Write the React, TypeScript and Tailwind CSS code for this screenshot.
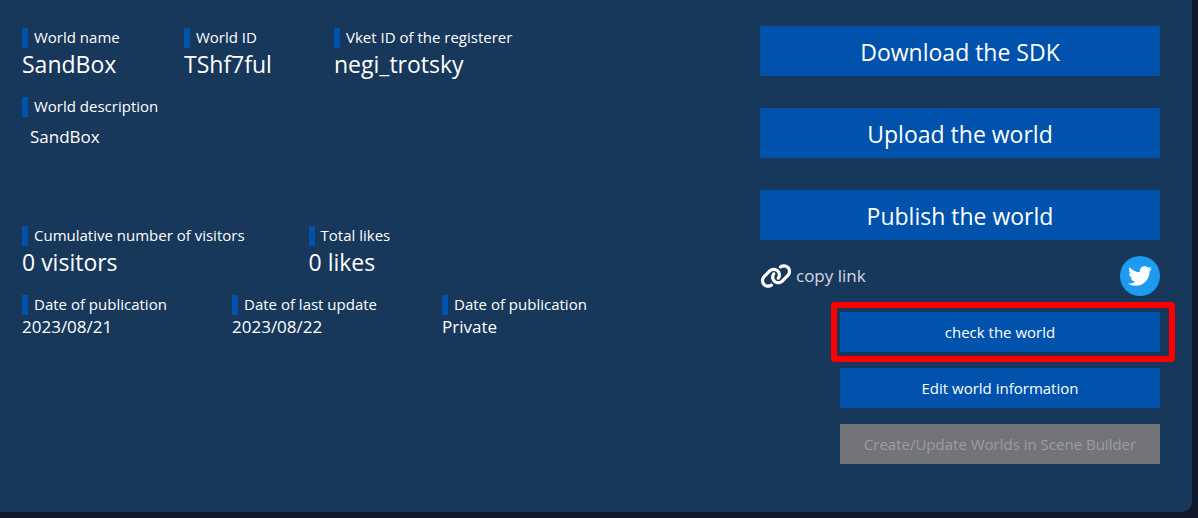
import type { ReactNode } from "react";
import { FaLink, FaTwitter } from "react-icons/fa6";

type FieldProps = { label: string; size?: "lg" | "md"; width?: string; children: ReactNode };

function Field({ label, size = "lg", width = "", children }: FieldProps) {
  return (
    <div className={width}>
      <dt className="h-5 border-l-[6px] border-[#0052ad] pl-1.5 text-[15px] leading-[18px] whitespace-nowrap">
        {label}
      </dt>
      <dd className={size === "lg" ? "text-[23px] leading-[33px]" : "text-[17px] leading-6"}>{children}</dd>
    </div>
  );
}

function MainButton({ children }: { children: ReactNode }) {
  return (
    <button type="button" className="h-[50px] w-full bg-[#0052ad] pt-0.5 text-[23px]">
      {children}
    </button>
  );
}

function SubButton({ children, disabled = false }: { children: ReactNode; disabled?: boolean }) {
  return (
    <button
      type="button"
      disabled={disabled}
      className="h-10 w-full bg-[#0052ad] text-[15px] disabled:bg-[#737477] disabled:text-[#9c9da0]"
    >
      {children}
    </button>
  );
}

export default function App() {
  return (
    <div className="min-h-screen bg-[#111829] pr-1.5 pb-1.5 font-['Open_Sans',sans-serif] text-white">
      <main className="flex min-h-[calc(100vh-6px)] justify-between rounded-br-[10px] bg-[#17375b] pr-8 pb-12 pl-[22px]">
        <section className="pt-7">
          <dl className="flex gap-16">
            <Field label="World name" width="w-[98px]">SandBox</Field>
            <Field label="World ID" width="w-[86px]">TShf7ful</Field>
            <Field label="Vket ID of the registerer">negi_trotsky</Field>
          </dl>
          <dl className="mt-4 min-h-[113px]">
            <Field label="World description" size="md">
              <p className="px-2 pt-2">SandBox</p>
            </Field>
          </dl>
          <dl className="mt-4 flex gap-16">
            <Field label="Cumulative number of visitors">0 visitors</Field>
            <Field label="Total likes">0 likes</Field>
          </dl>
          <dl className="mt-4 flex gap-16">
            <Field label="Date of publication" size="md" width="min-w-[146px]">2023/08/21</Field>
            <Field label="Date of last update" size="md" width="min-w-[146px]">2023/08/22</Field>
            <Field label="Date of publication" size="md" width="min-w-[146px]">Private</Field>
          </dl>
        </section>
        <section className="w-[400px] shrink-0 pt-[26px]">
          <div className="flex flex-col gap-8">
            <MainButton>Download the SDK</MainButton>
            <MainButton>Upload the world</MainButton>
            <MainButton>Publish the world</MainButton>
          </div>
          <div className="mt-4 flex items-center justify-between">
            <button type="button" className="flex items-center gap-1 text-[17px] text-[#d5dae0]">
              <FaLink className="h-[26px] w-8 text-white" />
              copy link
            </button>
            <a
              href="#twitter"
              aria-label="Share on Twitter"
              className="flex size-10 items-center justify-center rounded-full bg-[#1d9bf0]"
            >
              <FaTwitter className="size-6" />
            </a>
          </div>
          <div className="mt-4 ml-auto flex w-[320px] flex-col gap-4">
            <div className="relative">
              <SubButton>check the world</SubButton>
              <span className="pointer-events-none absolute -top-2.5 -right-[15px] -bottom-2.5 -left-[9px] rounded-sm border-6 border-[#ff0000]" />
            </div>
            <SubButton>Edit world information</SubButton>
            <SubButton disabled>Create/Update Worlds in Scene Builder</SubButton>
          </div>
        </section>
      </main>
    </div>
  );
}
